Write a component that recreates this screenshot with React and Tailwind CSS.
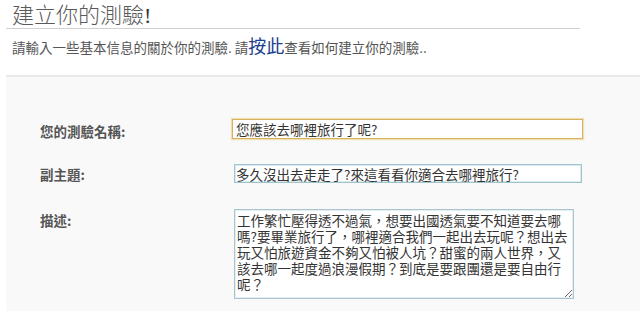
import React, { useState } from 'react';

const font = { fontFamily: '"Noto Sans CJK TC", "Noto Sans", sans-serif' };

export default function App() {
  const [form, setForm] = useState({
    title: '您應該去哪裡旅行了呢?',
    subtitle: '多久沒出去走走了?來這看看你適合去哪裡旅行?',
    desc: '工作繁忙壓得透不過氣，想要出國透氣要不知道要去哪嗎?要畢業旅行了，哪裡適合我們一起出去玩呢？想出去玩又怕旅遊資金不夠又怕被人坑？甜蜜的兩人世界，又該去哪一起度過浪漫假期？到底是要跟團還是要自由行呢？',
  });

  const handleChange = (e) => {
    setForm({ ...form, [e.target.name]: e.target.value });
  };

  return (
    <div className="min-h-[311px] bg-white font-['Noto_Sans_CJK_TC','Noto_Sans',sans-serif] text-[#555]">
      <div className="pl-[6px] pt-[1px]">
        <h1 className="w-[574px] border-b border-[#d0d0d0] pl-[6px] text-[22px] leading-[24px] font-light text-[#5a5a5a]">
          建立你的測驗<span className="font-['Liberation_Serif',serif] text-[#333]">!</span>
        </h1>
      </div>
      <p className="mt-[7px] h-[20px] pl-[12px] text-[13.5px] leading-[20px] text-[#555]">
        請輸入一些基本信息的關於你的測驗. 請
        <a href="#" className="text-[18px] leading-[18px] text-[#1d3f8f]">按此</a>
        查看如何建立你的測驗..
      </p>

      <div className="ml-[6px] mt-[19px] min-h-[238px] border-t-2 border-[#e8e8e8] bg-[#f9f9f9] pl-[34px] pt-[42px]">
        <div className="grid grid-cols-[192px_1fr] items-start">
          <label className="h-[20px] pt-[2px] text-[13.5px] leading-[20px] font-bold text-[#555]">您的測驗名稱:</label>
          <input
            name="title"
            value={form.title}
            onChange={handleChange}
            style={font}
            className="h-[20px] w-[351px] border border-[#d6b25c] bg-white px-[3px] text-[13.5px] leading-[18px] text-[#333] shadow-[0_0_1px_1px_rgba(230,190,100,0.45)] outline-none"
          />

          <label className="mt-[25px] h-[19px] text-[13.5px] leading-[20px] font-bold text-[#555]">副主題:</label>
          <input
            name="subtitle"
            value={form.subtitle}
            onChange={handleChange}
            style={font}
            className="ml-[2px] mt-[25px] h-[19px] w-[348px] border border-[#9fc3cf] bg-white px-[1px] text-[13.5px] leading-[17px] text-[#333] shadow-[inset_0_0_0_1px_#dceaef] outline-none"
          />

          <label className="mt-[26px] h-[20px] pt-[1px] text-[13.5px] leading-[20px] font-bold text-[#555]">描述:</label>
          <textarea
            name="desc"
            value={form.desc}
            onChange={handleChange}
            style={font}
            className="ml-[2px] mt-[26px] h-[90px] w-[340px] border border-[#a9c6d0] bg-white px-[2px] pt-[2px] text-[13.5px] leading-[16px] text-[#333] shadow-[inset_0_0_0_1px_#e3eef2] outline-none"
          />
        </div>
      </div>
    </div>
  );
}
